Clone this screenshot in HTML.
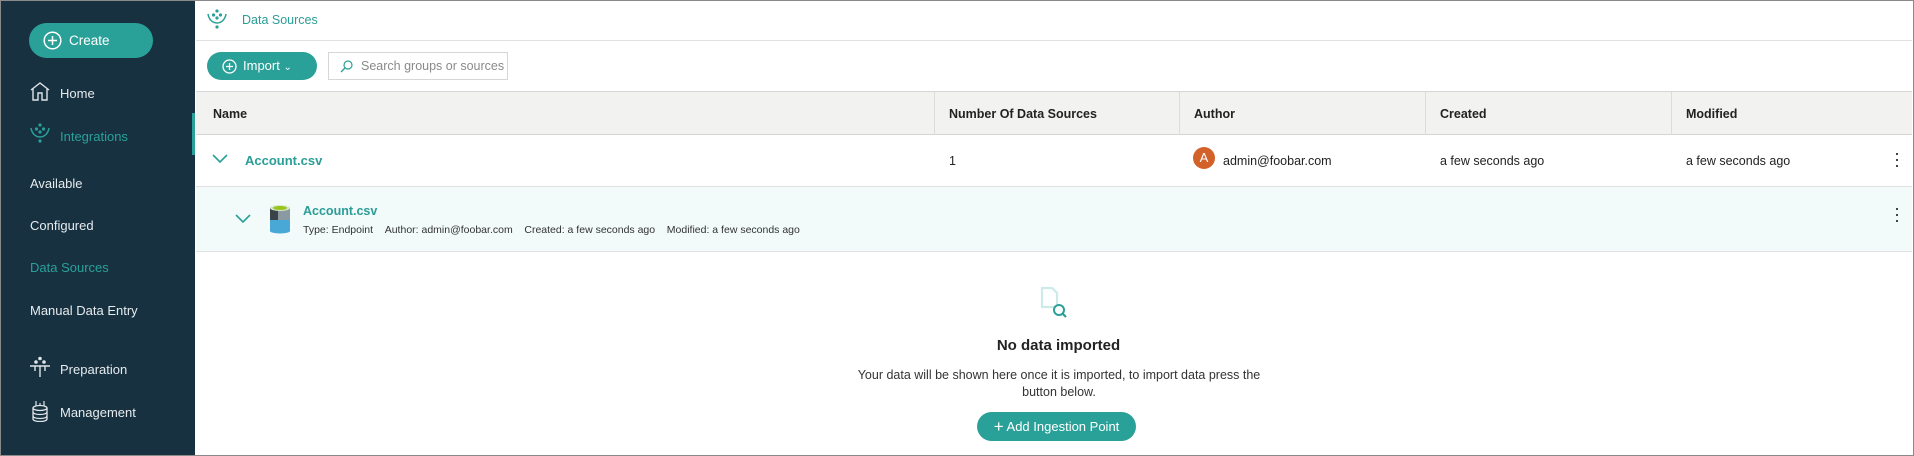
<!DOCTYPE html>
<html><head><meta charset="utf-8"><style>
*{box-sizing:border-box;margin:0;padding:0}
body{width:1914px;height:456px;overflow:hidden;font-family:"Liberation Sans",sans-serif;background:#fff;position:relative;color:#222;font-size:13px}
.frame{position:absolute;left:0;top:0;width:1914px;height:456px;border:1px solid #8a8a8a;pointer-events:none;z-index:10}
.side{position:absolute;left:0;top:0;width:195px;height:456px;background:#173140;color:#e6ebee}
.create{position:absolute;left:29px;top:23px;width:124px;height:35px;border-radius:18px;background:#2aa198;color:#fff;font-size:13.5px;line-height:35px;padding-left:40px}
.create svg{position:absolute;left:14px;top:8px}
.nav{position:absolute;left:30px;font-size:13px}
.bar{position:absolute;left:192px;top:113px;width:3px;height:42px;background:#2aa198}
.abs{position:absolute}
.hdr{position:absolute;left:196px;top:0;right:2px;height:41px;border-bottom:1px solid #e1e1e1}
.th{position:absolute;left:196px;right:2px;top:91px;height:44px;background:#f2f2f1;border-top:1px solid #d6d6d6;border-bottom:1px solid #d6d6d6;font-weight:bold;font-size:12.5px}
.th span{position:absolute;top:15px}
.sep{position:absolute;top:0;width:1px;height:43px;background:#dcdcdc}
.row1{position:absolute;left:196px;right:2px;top:135px;height:52px;border-bottom:1px solid #e1e1e1;font-size:12.5px}
.row2{position:absolute;left:196px;right:2px;top:187px;height:65px;background:#f2fafa;border-bottom:1px solid #e1e1e1}
.teal{color:#2a9d96;font-weight:bold}
.dots{position:absolute;width:2px;height:2px;background:#444;box-shadow:0 6px #444,0 12px #444}
</style></head><body>
<div class="side">
 <div class="create"><svg width="19" height="19" viewBox="0 0 19 19"><circle cx="9.5" cy="9.5" r="8.3" fill="none" stroke="#fff" stroke-width="1.5"/><path d="M9.5 5v9M5 9.5h9" stroke="#fff" stroke-width="1.5"/></svg>Create</div>
 <svg class="abs" style="left:29px;top:81px" width="22" height="20" viewBox="0 0 22 20"><path d="M2 9L11 2l9 7M4 8v11h5v-7h4v7h5V8" fill="none" stroke="#dfe5e8" stroke-width="1.4"/></svg>
 <div class="nav" style="left:60px;top:86px">Home</div>
 <svg class="abs" style="left:29px;top:122px" width="22" height="22" viewBox="0 0 22 22"><g fill="#2aa198"><circle cx="11" cy="3" r="1.6"/><circle cx="7.5" cy="7" r="1.6"/><circle cx="14.5" cy="7" r="1.6"/><circle cx="11" cy="10" r="1.6"/><circle cx="11" cy="19" r="1.6"/></g><path d="M2 6c1 6 5 9 9 9s8-3 9-9" fill="none" stroke="#2aa198" stroke-width="1.5"/></svg>
 <div class="nav" style="left:60px;top:129px;color:#2aa198">Integrations</div>
 <div class="bar"></div>
 <div class="nav" style="top:176px">Available</div>
 <div class="nav" style="top:218px">Configured</div>
 <div class="nav" style="top:260px;color:#2aa198">Data Sources</div>
 <div class="nav" style="top:303px">Manual Data Entry</div>
 <svg class="abs" style="left:29px;top:356px" width="22" height="22" viewBox="0 0 22 22"><g fill="#dfe5e8"><circle cx="11" cy="2.5" r="1.8"/><circle cx="7" cy="6" r="1.8"/><circle cx="15" cy="6" r="1.8"/></g><path d="M1 10h20M6 10v5M16 10v5M11 10v11" stroke="#dfe5e8" stroke-width="1.4"/></svg>
 <div class="nav" style="left:60px;top:362px">Preparation</div>
 <svg class="abs" style="left:31px;top:400px" width="18" height="22" viewBox="0 0 18 22"><path d="M5 1v5M13 1v5M9 3v3" stroke="#dfe5e8" stroke-width="1.2"/><ellipse cx="9" cy="8" rx="7" ry="2.5" fill="none" stroke="#dfe5e8" stroke-width="1.3"/><path d="M2 8v11c0 1.5 3 2.5 7 2.5s7-1 7-2.5V8M2 12c0 1.5 3 2.5 7 2.5s7-1 7-2.5M2 16c0 1.5 3 2.5 7 2.5s7-1 7-2.5" fill="none" stroke="#dfe5e8" stroke-width="1.3"/></svg>
 <div class="nav" style="left:60px;top:405px">Management</div>
</div>

<div class="hdr">
 <svg class="abs" style="left:10px;top:8px" width="22" height="22" viewBox="0 0 22 22"><g fill="#2aa198"><circle cx="11" cy="3" r="1.6"/><circle cx="7.5" cy="7" r="1.6"/><circle cx="14.5" cy="7" r="1.6"/><circle cx="11" cy="10" r="1.6"/><circle cx="11" cy="19" r="1.6"/></g><path d="M2 6c1 6 5 9 9 9s8-3 9-9" fill="none" stroke="#2aa198" stroke-width="1.5"/></svg>
 <div class="abs" style="left:46px;top:13px;font-size:12.5px;color:#2a9d96">Data Sources</div>
</div>
<div class="abs" style="left:207px;top:52px;width:110px;height:28px;border-radius:14px;background:#2aa198;color:#fff;font-size:13px;line-height:28px;padding-left:36px">Import <span style="font-size:10px">&#8964;</span>
 <svg class="abs" style="left:15px;top:7px" width="15" height="15" viewBox="0 0 15 15"><circle cx="7.5" cy="7.5" r="6.5" fill="none" stroke="#fff" stroke-width="1.3"/><path d="M7.5 4v7M4 7.5h7" stroke="#fff" stroke-width="1.3"/></svg></div>
<div class="abs" style="left:328px;top:52px;width:180px;height:28px;border:1px solid #d6d6d6;color:#8a8a8a;font-size:12.5px;line-height:26px;padding-left:32px">Search groups or sources
 <svg class="abs" style="left:11px;top:7px" width="13" height="13" viewBox="0 0 13 13"><circle cx="8" cy="5" r="4" fill="none" stroke="#2aa198" stroke-width="1.2"/><path d="M5 8L1 12" stroke="#2aa198" stroke-width="1.3"/></svg></div>

<div class="th">
 <span style="left:17px">Name</span><span style="left:753px">Number Of Data Sources</span><span style="left:998px">Author</span><span style="left:1244px">Created</span><span style="left:1490px">Modified</span>
 <div class="sep" style="left:738px"></div><div class="sep" style="left:983px"></div><div class="sep" style="left:1229px"></div><div class="sep" style="left:1475px"></div>
</div>
<div class="row1">
 <svg class="abs" style="left:16px;top:19px" width="16" height="10" viewBox="0 0 16 10"><path d="M1 1l7 7 7-7" fill="none" stroke="#2aa198" stroke-width="1.6"/></svg>
 <div class="abs teal" style="left:49px;top:18px;font-size:13px">Account.csv</div>
 <div class="abs" style="left:753px;top:19px">1</div>
 <div class="abs" style="left:997px;top:12px;width:22px;height:22px;border-radius:50%;background:#d2622a;color:#fff;text-align:center;line-height:22px;font-size:13px">A</div>
 <div class="abs" style="left:1027px;top:19px">admin@foobar.com</div>
 <div class="abs" style="left:1244px;top:19px">a few seconds ago</div>
 <div class="abs" style="left:1490px;top:19px">a few seconds ago</div>
 <div class="dots" style="left:1700px;top:18px"></div>
</div>
<div class="row2">
 <svg class="abs" style="left:39px;top:27px" width="16" height="10" viewBox="0 0 16 10"><path d="M1 1l7 7 7-7" fill="none" stroke="#2aa198" stroke-width="1.6"/></svg>
 <svg class="abs" style="left:73px;top:17px" width="22" height="30" viewBox="0 0 22 30"><rect x="1" y="4" width="20" height="23" fill="#8a9aa0"/><rect x="1" y="4" width="8" height="12" fill="#3a4448"/><rect x="1" y="16" width="20" height="11" fill="#4aa8d6"/><ellipse cx="11" cy="27" rx="10" ry="2.5" fill="#4aa8d6"/><ellipse cx="11" cy="4" rx="10" ry="3" fill="#d4e8c8"/><ellipse cx="11" cy="4" rx="7" ry="2" fill="#9ac31c"/></svg>
 <div class="abs teal" style="left:107px;top:17px;font-size:12.5px">Account.csv</div>
 <div class="abs" style="left:107px;top:37px;font-size:10.5px;color:#333;word-spacing:0">Type: Endpoint&nbsp;&nbsp;&nbsp;&nbsp;Author: admin@foobar.com&nbsp;&nbsp;&nbsp;&nbsp;Created: a few seconds ago&nbsp;&nbsp;&nbsp;&nbsp;Modified: a few seconds ago</div>
 <div class="dots" style="left:1700px;top:21px"></div>
</div>

<svg class="abs" style="left:1040px;top:286px" width="30" height="36" viewBox="0 0 30 36"><path d="M2 2h10l5 5v14H2z" fill="none" stroke="#cde9e8" stroke-width="2.2"/><circle cx="19" cy="24" r="5" fill="#fff" stroke="#2aa198" stroke-width="2"/><path d="M22.5 27.5L26 31" stroke="#2aa198" stroke-width="2.2"/></svg>
<div class="abs" style="left:0;width:2117px;top:337px;text-align:center;font-weight:bold;font-size:15px;color:#222">No data imported</div>
<div class="abs" style="left:843px;width:432px;top:367px;text-align:center;font-size:12.5px;line-height:17px;color:#333">Your data will be shown here once it is imported, to import data press the button below.</div>
<div class="abs" style="left:977px;top:412px;width:159px;height:29px;border-radius:15px;background:#2aa198;color:#fff;font-size:13px;line-height:29px;text-align:center"><span style="font-size:17px;vertical-align:-1px">+</span> Add Ingestion Point</div>
<div class="frame"></div>
</body></html>
